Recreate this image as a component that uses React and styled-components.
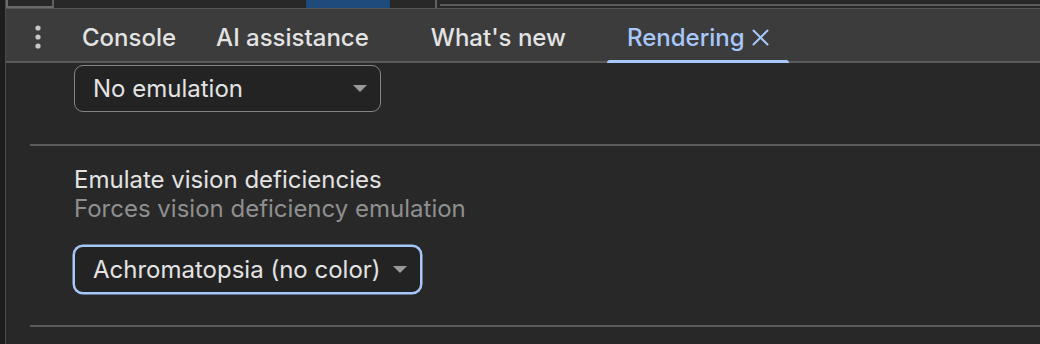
import React from "react";
import styled, { createGlobalStyle } from "styled-components";

const COLORS = {
  rail: "#1d1d1d",
  bg: "#282828",
  bar: "#3c3c3c",
  line: "#5b5b5b",
  text: "#e3e3e3",
  muted: "#8f8f8f",
  accent: "#a8c7fa",
  blue: "#1f4b7b",
};

const Global = createGlobalStyle`
  html, body {
    margin: 0;
    background: ${COLORS.bg};
  }
  body {
    font-family: Inter, "Noto Sans", "Liberation Sans", sans-serif;
    -webkit-font-smoothing: antialiased;
  }
`;

const Page = styled.div`
  display: flex;
  width: 1040px;
  height: 344px;
  overflow: hidden;
  background: ${COLORS.bg};
`;

const Rail = styled.div`
  width: 5px;
  flex-shrink: 0;
  background: ${COLORS.rail};
  border-right: 1px solid #4a4a4a;
`;

const Column = styled.div`
  flex: 1;
  display: flex;
  flex-direction: column;
  min-width: 0;
`;

const Strip = styled.div`
  display: flex;
  height: 8px;
  flex-shrink: 0;
`;

const StripCell = styled.div`
  width: ${({ $w }) => ($w ? `${$w}px` : "auto")};
  flex: ${({ $w }) => ($w ? "none" : 1)};
  background: ${({ $blue }) => ($blue ? COLORS.blue : COLORS.bg)};
  border-left: ${({ $left }) => ($left ? `2px solid #6a6a6a` : "none")};
  border-right: ${({ $right }) => ($right ? `2px solid #5f5f5f` : "none")};
  border-bottom: ${({ $bottom }) => ($bottom ? `2px solid #6a6a6a` : "none")};
  box-sizing: border-box;
`;

const DoubleLine = styled.div`
  flex: 1;
  margin-left: 3px;
  box-sizing: border-box;
  border-top: 4px solid ${COLORS.bg};
  background: linear-gradient(${COLORS.line} 0 2px, ${COLORS.bg} 2px);
`;

const TabBar = styled.div`
  display: flex;
  align-items: stretch;
  height: 55px;
  flex-shrink: 0;
  background: ${COLORS.bar};
  border-top: 1px solid #555;
  border-bottom: 2px solid ${COLORS.line};
  box-sizing: border-box;
`;

const Kebab = styled.div`
  width: 64px;
  display: flex;
  align-items: center;
  justify-content: center;
  padding-top: 3px;
  margin-right: -8px;
`;

const Tab = styled.div`
  position: relative;
  display: flex;
  align-items: center;
  gap: 7px;
  padding: 5px ${({ $extra }) => 20 + ($extra || 0)}px 0 20px;
  font-size: 24px;
  font-weight: 500;
  color: ${({ $active }) => ($active ? COLORS.accent : COLORS.text)};

  &::after {
    content: "";
    display: ${({ $active }) => ($active ? "block" : "none")};
    position: absolute;
    left: 0;
    right: 0;
    bottom: -2px;
    height: 3px;
    border-radius: 3px 3px 0 0;
    background: ${COLORS.accent};
  }
`;

const Content = styled.div`
  flex: 1;
  display: flex;
  flex-direction: column;
`;

const Section = styled.div`
  margin-left: 24px;
  padding: ${({ $first }) => ($first ? "2px 0 32px 44px" : "19px 0 32px 44px")};
  border-bottom: 2px solid ${COLORS.line};
  display: flex;
  flex-direction: column;
  align-items: flex-start;
`;

const Title = styled.div`
  font-size: 24px;
  line-height: 29px;
  color: ${COLORS.text};
`;

const Subtitle = styled.div`
  font-size: 24px;
  line-height: 29px;
  color: ${COLORS.muted};
  margin-bottom: 23px;
`;

const Select = styled.div`
  display: inline-flex;
  align-items: center;
  justify-content: space-between;
  gap: 12px;
  min-width: 307px;
  height: 47px;
  box-sizing: border-box;
  padding: 0 13px 0 18px;
  border-radius: 9px;
  border: 1.5px solid ${({ $focus }) => ($focus ? COLORS.accent : "#858585")};
  box-shadow: ${({ $focus }) => ($focus ? `0 0 0 1.5px ${COLORS.accent}` : "none")};
  background: #232323;
  font-size: 24px;
  color: ${COLORS.text};
`;

const Caret = styled.span`
  width: 0;
  height: 0;
  border-left: 7px solid transparent;
  border-right: 7px solid transparent;
  border-top: 7px solid #9a9a9a;
`;

const Dots = () => (
  <svg width="6" height="24" viewBox="0 0 6 24">
    <circle cx="3" cy="3" r="2.6" fill="#c8c8c8" />
    <circle cx="3" cy="12" r="2.6" fill="#c8c8c8" />
    <circle cx="3" cy="21" r="2.6" fill="#c8c8c8" />
  </svg>
);

const Close = () => (
  <svg width="17" height="17" viewBox="0 0 17 17">
    <path
      d="M1.5 1.5 L15.5 15.5 M15.5 1.5 L1.5 15.5"
      stroke={COLORS.accent}
      strokeWidth="2"
      strokeLinecap="round"
    />
  </svg>
);

export default function App() {
  return (
    <>
      <Global />
      <Page>
        <Rail />
        <Column>
          <Strip>
            <StripCell $w={48} $left $right $bottom />
            <StripCell $w={252} />
            <StripCell $w={84} $blue />
            <StripCell $w={47} $right />
            <DoubleLine />
          </Strip>
          <TabBar>
            <Kebab>
              <Dots />
            </Kebab>
            <Tab>Console</Tab>
            <Tab $extra={22}>AI assistance</Tab>
            <Tab $extra={21}>What's new</Tab>
            <Tab $active>
              Rendering
              <Close />
            </Tab>
          </TabBar>
          <Content>
            <Section $first>
              <Select>
                No emulation
                <Caret />
              </Select>
            </Section>
            <Section>
              <Title>Emulate vision deficiencies</Title>
              <Subtitle>Forces vision deficiency emulation</Subtitle>
              <Select $focus>
                Achromatopsia (no color)
                <Caret />
              </Select>
            </Section>
          </Content>
        </Column>
      </Page>
    </>
  );
}
